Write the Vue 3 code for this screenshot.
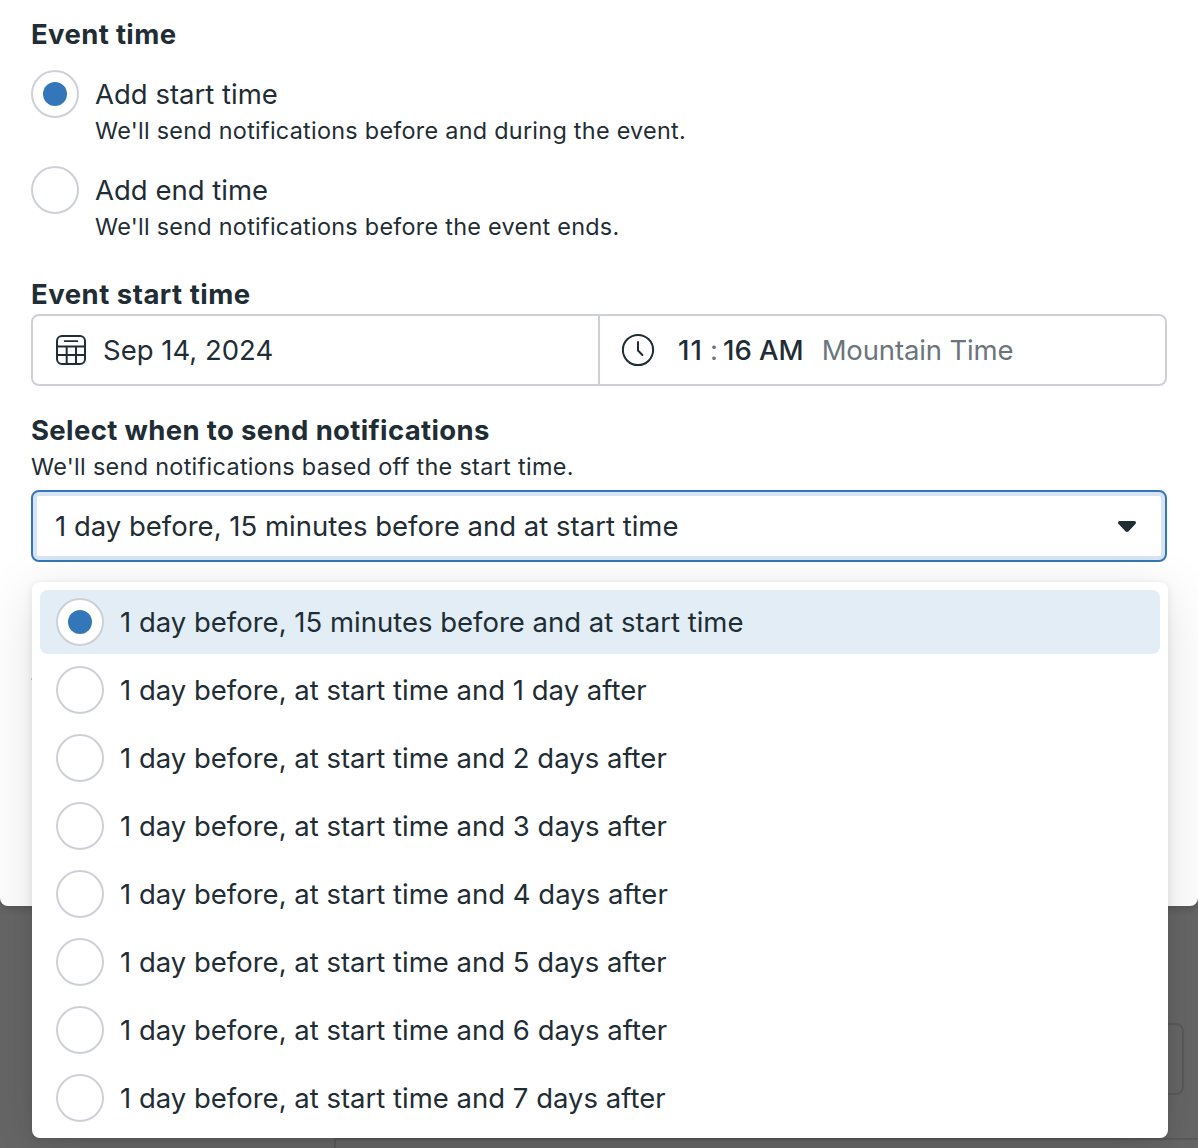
<script setup>
import { ref } from 'vue'

const modes = [
  { id: 'start', label: 'Add start time', hint: "We'll send notifications before and during the event." },
  { id: 'end', label: 'Add end time', hint: "We'll send notifications before the event ends." },
]
const mode = ref('start')

const options = [
  '1 day before, 15 minutes before and at start time',
  '1 day before, at start time and 1 day after',
  ...[2, 3, 4, 5, 6, 7].map((n) => `1 day before, at start time and ${n} days after`),
]
const selected = ref(0)
</script>

<template>
  <div class="screen">
    <div class="behind-field"></div>
    <div class="behind-panel"></div>

    <section class="modal">
      <h2 class="heading">Event time</h2>
      <div class="modes">
        <div v-for="m in modes" :key="m.id" class="mode" @click="mode = m.id">
          <span class="radio" :class="{ checked: mode === m.id }"></span>
          <div class="mode-text">
            <div class="label">{{ m.label }}</div>
            <div class="hint">{{ m.hint }}</div>
          </div>
        </div>
      </div>

      <h2 class="heading start-heading">Event start time</h2>
      <div class="datetime">
        <div class="cell date">
          <svg class="calendar" width="32" height="32" viewBox="0 0 32 32" fill="none" stroke="currentColor" stroke-width="2">
            <rect x="2" y="2" width="28" height="28" rx="5" />
            <path d="M2 12.5H30M2 21H30M11.7 12.5V30M21 12.5V30" />
            <path d="M9.7 7.2H22.3" stroke-linecap="round" stroke-width="1.8" />
          </svg>
          <span class="label">Sep 14, 2024</span>
        </div>
        <div class="cell time">
          <svg width="34" height="34" viewBox="0 0 34 34" fill="none" stroke="currentColor" stroke-width="2" stroke-linecap="round" stroke-linejoin="round">
            <circle cx="17" cy="17" r="15.1" />
            <path d="M17 9V17.5L21.4 22" />
          </svg>
          <span class="label hour">11</span>
          <span class="label colon">:</span>
          <span class="label minute">16 AM</span>
          <span class="label zone">Mountain Time</span>
        </div>
      </div>

      <h2 class="heading notify-heading">Select when to send notifications</h2>
      <div class="hint notify-hint">We'll send notifications based off the start time.</div>

      <div class="select-wrap">
        <div class="select">
          <span class="label">{{ options[selected] }}</span>
          <svg width="18" height="11" viewBox="0 0 18 11" fill="currentColor">
            <path d="M1.6 0H16.4C17.8 0 18.5 1.8 17.4 2.9L10.6 10.3C9.7 11.2 8.3 11.2 7.4 10.3L0.6 2.9C-0.5 1.8 0.2 0 1.6 0Z" />
          </svg>
        </div>
        <ul class="menu">
          <li v-for="(o, i) in options" :key="o" class="option" :class="{ active: i === selected }" @click="selected = i">
            <span class="radio" :class="{ checked: i === selected }"></span>
            <span class="label">{{ o }}</span>
          </li>
        </ul>
        <span class="mark"></span>
      </div>
    </section>
  </div>
</template>

<style>
body {
  margin: 0;
  background: #666;
}
</style>

<style scoped>
.screen {
  position: relative;
  box-sizing: border-box;
  height: 1148px;
  overflow: hidden;
  background: #666;
  color: #1f2d35;
  font-family: Inter, 'Open Sans', sans-serif;
}
.modal {
  position: relative;
  box-sizing: border-box;
  height: 906px;
  padding: 14px 31px 0;
  background: #fff;
  border-radius: 0 0 8px 8px;
  box-shadow: 0 2px 8px rgba(0, 0, 0, 0.2);
}
.heading {
  margin: 0;
  font-size: 27.5px;
  font-weight: 700;
  line-height: 40px;
  letter-spacing: 0.36px;
}
.label {
  font-size: 27.5px;
  line-height: 40px;
  white-space: nowrap;
}
.hint {
  font-size: 23.4px;
  line-height: 32px;
  letter-spacing: 0.27px;
  white-space: nowrap;
}
.modes {
  display: flex;
  flex-direction: column;
  gap: 24px;
  padding-top: 16px;
}
.mode {
  display: flex;
  gap: 16px;
  height: 72px;
}
.mode-text {
  padding-top: 4px;
}
.mode .hint {
  margin-top: 1px;
}
.radio {
  display: flex;
  flex: none;
  align-items: center;
  justify-content: center;
  box-sizing: border-box;
  width: 48px;
  height: 48px;
  border: 2px solid #cdd1d7;
  border-radius: 50%;
  background: #fff;
}
.radio.checked::after {
  content: '';
  width: 24px;
  height: 24px;
  border-radius: 50%;
  background: #3476ba;
}
.start-heading {
  margin-top: 36px;
  letter-spacing: 0.5px;
}
.datetime {
  display: flex;
  box-sizing: border-box;
  height: 72px;
  border: 2px solid #cdd1d7;
  border-radius: 8px;
}
.cell {
  display: flex;
  align-items: center;
}
.date {
  flex: 0 0 567px;
  box-sizing: border-box;
  padding-left: 22px;
  border-right: 2px solid #cdd1d7;
}
.date .label {
  margin-left: 16px;
}
.time {
  padding-left: 21px;
}
.hour,
.minute {
  font-weight: 450;
}
.hour {
  width: 32px;
  margin-left: 23px;
  letter-spacing: 1px;
}
.colon {
  width: 13px;
  color: #6c757b;
}
.zone {
  margin-left: 18px;
  color: #6c757b;
  letter-spacing: -0.15px;
}
.notify-heading {
  margin-top: 24px;
}
.notify-hint {
  margin: 1px 0 7px;
  letter-spacing: 0.31px;
}
.select-wrap {
  position: relative;
}
.select {
  display: flex;
  align-items: center;
  justify-content: space-between;
  box-sizing: border-box;
  height: 72px;
  padding: 0 29px 0 22px;
  border: 2px solid #3476ba;
  border-radius: 8px;
  box-shadow: inset 0 0 0 4px #d8e4f1;
}
.menu {
  position: absolute;
  top: 92px;
  left: 1px;
  display: flex;
  flex-direction: column;
  gap: 4px;
  box-sizing: border-box;
  width: 1136px;
  height: 556px;
  margin: 0;
  padding: 8px;
  list-style: none;
  background: #fff;
  border-radius: 8px;
  box-shadow: 0 12px 56px rgba(0, 0, 0, 0.12), 0 2px 8px rgba(0, 0, 0, 0.1);
}
.option {
  display: flex;
  flex: none;
  align-items: center;
  gap: 16px;
  height: 64px;
  padding-left: 16px;
  border-radius: 8px;
}
.option.active {
  background: #e2edf6;
}
.mark {
  position: absolute;
  top: 188px;
  left: 0;
  width: 1px;
  height: 2px;
  background: #b5b7b9;
}
/* Dimmed page outlines showing through the overlay */
.behind-field {
  position: absolute;
  top: 1023px;
  right: 14px;
  box-sizing: border-box;
  width: 848px;
  height: 72px;
  border: 2px solid #5a5a5a;
  border-radius: 8px;
}
.behind-panel {
  position: absolute;
  top: 1138px;
  left: 334px;
  right: 0;
  height: 20px;
  border-top: 2px solid #5a5a5a;
  border-left: 2px solid #5a5a5a;
}
</style>
